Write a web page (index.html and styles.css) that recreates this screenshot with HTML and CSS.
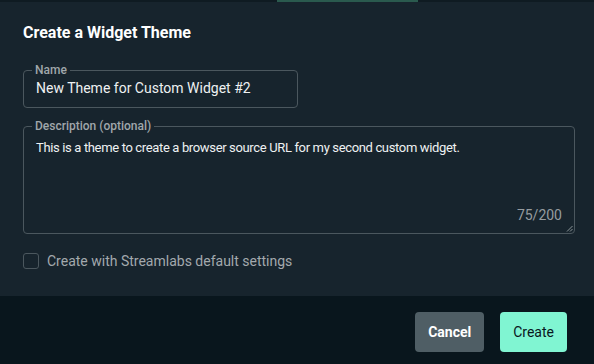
FILE: index.html
```html
<!DOCTYPE html>
<html lang="en">
<head>
  <meta charset="UTF-8">
  <meta name="viewport" content="width=device-width, initial-scale=1.0">
  <title>Create a Widget Theme</title>
  <link rel="stylesheet" href="styles.css">
</head>
<body>
  <div class="dialog">
    <div class="topline"><span class="topline-mark"></span></div>

    <div class="dialog-body">
      <h2 class="title">Create a Widget Theme</h2>

      <fieldset class="field field-name">
        <legend>Name</legend>
        <input type="text" class="field-input" value="New Theme for Custom Widget #2">
      </fieldset>

      <fieldset class="field field-desc">
        <legend>Description (optional)</legend>
        <textarea class="field-textarea">This is a theme to create a browser source URL for my second custom widget.</textarea>
        <span class="counter">75/200</span>
        <svg class="resizer" width="7" height="7" viewBox="0 0 7 7">
          <path d="M6.5 1 L1 6.5 M6.5 4 L4 6.5" stroke="#8b9599" stroke-width="1" fill="none"/>
        </svg>
      </fieldset>

      <label class="check">
        <span class="check-box"></span>
        <span class="check-label">Create with Streamlabs default settings</span>
      </label>
    </div>

    <div class="dialog-footer">
      <button class="btn btn-cancel">Cancel</button>
      <button class="btn btn-create">Create</button>
    </div>
  </div>
</body>
</html>
```

FILE: styles.css
```css
html, body {
  margin: 0;
  padding: 0;
  height: 100%;
}
body {
  font-family: Roboto, "Liberation Sans", sans-serif;
  background-color: #17242d;
  color: #ffffff;
}
.dialog {
  height: 100vh;
  display: flex;
  flex-direction: column;
}
.topline {
  height: 2px;
  background-color: #0f1b22;
  padding-left: 277px;
  flex: none;
}
.topline-mark {
  display: block;
  width: 141px;
  height: 2px;
  background-color: #2a5a4e;
}
.dialog-body {
  flex: 1;
  padding: 20px 19px 0 23px;
}
.title {
  margin: 0;
  font-size: 16px;
  font-weight: 700;
  line-height: 22px;
  color: #ffffff;
}
.field {
  margin: 0;
  padding: 0;
  border: 1px solid #4b575e;
  border-radius: 4px;
  position: relative;
  box-sizing: border-box;
}
.field legend {
  margin-left: 8px;
  padding: 0 3px;
  font-size: 12px;
  font-weight: 500;
  line-height: 12px;
  color: #a0a7ab;
}
.field-name {
  width: 275px;
  margin-top: 20px;
}
.field-input {
  display: block;
  width: 100%;
  box-sizing: border-box;
  height: 24px;
  margin: 0 0 7px;
  padding: 0 12px;
  border: none;
  outline: none;
  background: transparent;
  font-family: inherit;
  font-size: 14px;
  color: #eef1f2;
}
.field-desc {
  width: 552px;
  margin-top: 12px;
}
.field-textarea {
  display: block;
  width: 100%;
  box-sizing: border-box;
  height: 101px;
  margin: 0;
  padding: 6px 12px 0;
  border: none;
  outline: none;
  resize: none;
  background: transparent;
  font-family: inherit;
  font-size: 13px;
  line-height: 20px;
  letter-spacing: -0.35px;
  color: #eef1f2;
}
.counter {
  position: absolute;
  right: 12px;
  bottom: 10px;
  font-size: 14px;
  line-height: 16px;
  color: #959ca0;
}
.resizer {
  position: absolute;
  right: 1px;
  bottom: 1px;
}
.check {
  display: flex;
  align-items: center;
  gap: 8px;
  margin-top: 19px;
}
.check-box {
  width: 16px;
  height: 16px;
  box-sizing: border-box;
  border: 1px solid #4b575e;
  border-radius: 3px;
}
.check-label {
  font-size: 14px;
  line-height: 16px;
  color: #a3a9ad;
}
.dialog-footer {
  flex: none;
  height: 68px;
  box-sizing: border-box;
  background-color: #09161d;
  display: flex;
  justify-content: flex-end;
  align-items: flex-start;
  gap: 16px;
  padding: 16px 27px 0 0;
}
.btn {
  height: 40px;
  padding: 0 13px;
  border: none;
  border-radius: 4px;
  font-family: inherit;
  font-size: 14px;
  cursor: pointer;
}
.btn-cancel {
  background-color: #4f5e65;
  color: #ffffff;
  font-weight: 700;
}
.btn-create {
  background-color: #80f5d2;
  color: #09161d;
}
```
